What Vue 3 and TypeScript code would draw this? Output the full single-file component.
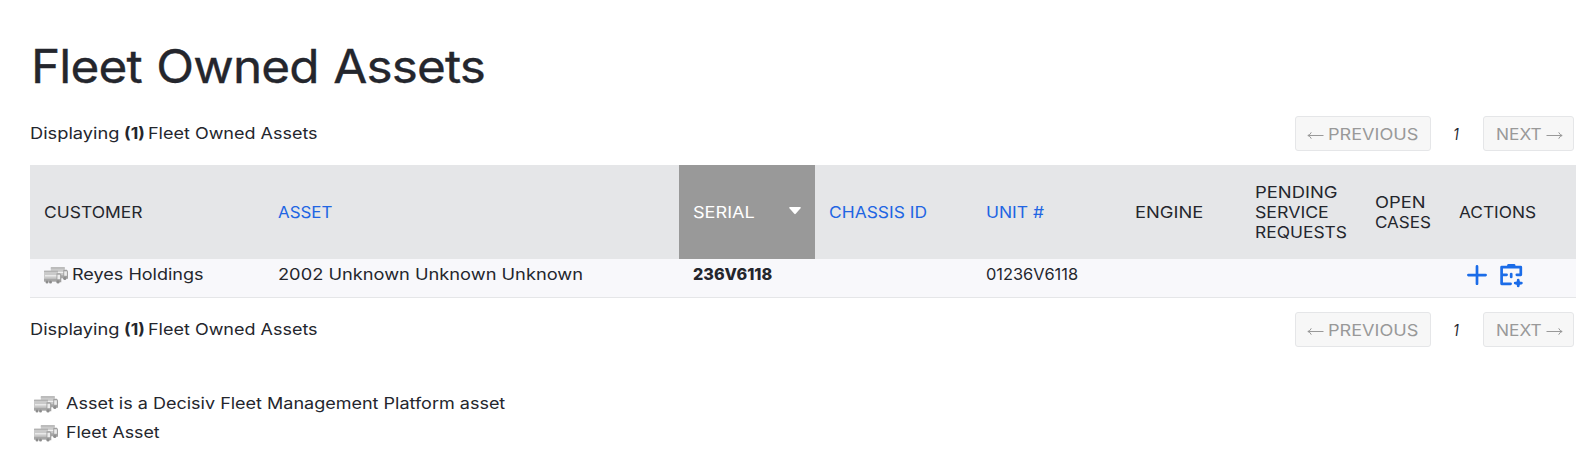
<script setup lang="ts">
import { defineComponent, h } from 'vue'

interface Column {
  key: string
  lines: string[]
  sortable?: boolean
  sorted?: boolean
}

const columns: Column[] = [
  { key: 'customer', lines: ['CUSTOMER'] },
  { key: 'asset', lines: ['ASSET'], sortable: true },
  { key: 'serial', lines: ['SERIAL'], sorted: true },
  { key: 'chassis', lines: ['CHASSIS ID'], sortable: true },
  { key: 'unit', lines: ['UNIT #'], sortable: true },
  { key: 'engine', lines: ['ENGINE'] },
  { key: 'pending', lines: ['PENDING', 'SERVICE', 'REQUESTS'] },
  { key: 'cases', lines: ['OPEN', 'CASES'] },
  { key: 'actions', lines: ['ACTIONS'] },
]

const total = 1

const truck = (x: number, y: number) => [
  h('rect', { x, y, width: 14, height: 9.5, rx: 0.8, fill: '#cacaca' }),
  h('rect', { x, y, width: 14, height: 1.2, fill: '#b0b0b0' }),
  h('rect', { x: x + 1, y: y + 4.5, width: 12, height: 1.2, fill: '#f0f0f0' }),
  h('path', { d: `M${x} ${y + 8}h14v3h-14z`, fill: '#a6a6a6' }),
  h('path', { d: `M${x + 12.5} ${y + 2.5}h3.6l1.2 1.5v7.5h-4.8z`, fill: '#a0a0a0' }),
  h('rect', { x: x + 13.4, y: y + 4, width: 2.7, height: 4.5, fill: '#ececec' }),
  h('circle', { cx: x + 3, cy: y + 11.2, r: 1.5, fill: '#8c8c8c' }),
  h('circle', { cx: x + 6.5, cy: y + 11.2, r: 1.5, fill: '#8c8c8c' }),
  h('circle', { cx: x + 14, cy: y + 11.2, r: 1.6, fill: '#8c8c8c' }),
]

const FleetIcon = defineComponent({
  render: () =>
    h('svg', { width: 24, height: 17, viewBox: '0 0 24 17', 'aria-hidden': 'true' }, [
      ...truck(6.8, 0.3),
      ...truck(0, 3.7),
    ]),
})
</script>

<template>
  <main class="page">
    <h1><span class="wide">Fleet Owned Assets</span></h1>
    <template v-for="place in ['top', 'bottom']" :key="place">
      <div class="bar">
        <p class="count">
          <span class="shown"><span class="wide">Displaying</span></span>
          <b><span class="wide">({{ total }})</span></b>
          <span class="what"><span class="wide">Fleet Owned Assets</span></span>
        </p>
        <nav class="pager">
          <span class="btn prev">
            <svg width="17" height="8" viewBox="0 0 17 8"><path d="M16.5 4.5H1M4.3 1.3Q3.2 4 .8 4.5 3.2 5 4.3 7.7" /></svg>
            <span class="wide">PREVIOUS</span>
          </span>
          <em>1</em>
          <span class="btn next">
            <span class="wide">NEXT</span>
            <svg width="17" height="8" viewBox="0 0 17 8"><path d="M.5 4.5H16M12.7 1.3Q13.8 4 16.2 4.5 13.8 5 12.7 7.7" /></svg>
          </span>
        </nav>
      </div>
      <section v-if="place === 'top'" class="table">
        <div class="row head">
          <div
            v-for="c in columns"
            :key="c.key"
            :class="['cell', c.key, { sortable: c.sortable, sorted: c.sorted }]"
          >
            <div class="label">
              <span v-for="line in c.lines" :key="line" class="wide">{{ line }}</span>
            </div>
            <svg v-if="c.sorted" class="caret" width="12" height="8" viewBox="0 0 12 8">
              <path d="M.9 0h10.2q1.2.3.4 1.3L6.7 6.8q-.7.7-1.4 0L.5 1.3Q-.3.3.9 0z" fill="#fff" />
            </svg>
          </div>
        </div>
        <div class="row body">
          <div class="cell holder"><FleetIcon class="fleet" /><span class="wide">Reyes Holdings</span></div>
          <div class="cell model"><span class="wide">2002 Unknown Unknown Unknown</span></div>
          <div class="cell number"><span class="wide">236V6118</span></div>
          <div class="cell"></div>
          <div class="cell unit-no"><span class="wide">01236V6118</span></div>
          <div class="cell"></div>
          <div class="cell"></div>
          <div class="cell"></div>
          <div class="cell tools">
            <svg width="20" height="20" viewBox="0 0 20 20">
              <path d="M10 1.4v17.4M1.4 10.1h17.2" />
            </svg>
            <svg width="24" height="24" viewBox="0 0 24 24">
              <path d="M8.5 1.4h5.6" stroke-width="2.6" />
              <path d="M1.6 19.4V3.2h19.2v7.6h-4M1.6 10.8h5M1.6 19.8h9" />
              <path d="M11.2 10v3" />
              <path d="M18.2 16v6M15.2 19.1h6.2" />
              <path d="M18.2 15.4l1.2 2.5 2.5 1.2-2.5 1.2-1.2 2.4-1.2-2.4-2.4-1.2 2.4-1.2z" class="solid" />
            </svg>
          </div>
        </div>
      </section>
    </template>
    <ul class="legend">
      <li><FleetIcon /><span class="wide platform">Asset is a Decisiv Fleet Management Platform asset</span></li>
      <li><FleetIcon /><span class="wide fleet-asset">Fleet Asset</span></li>
    </ul>
  </main>
</template>

<style>
body {
  margin: 0;
  background: #fff;
}
</style>

<style scoped>
.page {
  box-sizing: border-box;
  width: 1590px;
  height: 463px;
  padding: 38px 14px 0 30px;
  overflow: hidden;
  color: #24262d;
  font: 400 16px/20px Inter, "Liberation Sans", sans-serif;
}
.wide {
  --stretch: 1.1;
  display: inline-block;
  transform: scaleX(var(--stretch));
  transform-origin: 0 50%;
  white-space: nowrap;
}
h1 {
  height: 56px;
  margin: 0 0 22px 1px;
  font-size: 46px;
  font-weight: 400;
  line-height: 56px;
  letter-spacing: -0.8px;
  word-spacing: 1.5px;
  -webkit-text-stroke: 0.35px #24262d;
}
h1 .wide { --stretch: 1.075; }
.bar {
  display: flex;
  justify-content: space-between;
  height: 35px;
  padding-right: 2px;
}
.count {
  display: flex;
  margin: 7px 0 0;
}
.shown {
  width: 93.5px;
}
.count b {
  width: 24.5px;
}
.shown .wide { --stretch: 1.14; }
.what .wide { --stretch: 1.124; }
.pager {
  display: flex;
  align-items: center;
}
.btn {
  box-sizing: border-box;
  display: flex;
  align-items: center;
  height: 35px;
  padding-top: 1px;
  border: 1px solid #e5e6e8;
  border-radius: 3px;
  background: #f7f7f7;
  color: #999;
}
.btn svg {
  margin-top: 2px;
  fill: none;
  stroke: #999;
  stroke-width: 1;
}
.prev {
  width: 136px;
  gap: 4.5px;
  padding-left: 10.5px;
}
.next {
  width: 91px;
  justify-content: space-between;
  padding: 1px 10.5px 0 11.5px;
}
.prev .wide { --stretch: 1.132; }
.next .wide { --stretch: 1.08; }
.pager em {
  width: 52px;
  text-align: center;
  font: italic 400 16px/20px Inter, sans-serif;
  transform: translateX(-1px) scaleX(0.85);
}
.table {
  margin: 14px 0;
}
.row {
  display: grid;
  grid-template-columns: 234px 415px 136px 157px 149px 120px 120px 84px 131px;
}
.head {
  height: 94px;
  background: #e5e6e8;
}
.cell {
  display: flex;
  align-items: center;
  padding-left: 14px;
  white-space: nowrap;
}
.label {
  display: flex;
  flex-direction: column;
  align-items: flex-start;
}
.sortable {
  color: #2165e3;
}
.sorted {
  justify-content: space-between;
  padding-right: 14px;
  background: #999;
  color: #fff;
}
.caret {
  margin-bottom: 2px;
}
.customer .wide { --stretch: 1.09; }
.asset .wide { --stretch: 1.055; }
.serial .wide { --stretch: 1.132; }
.chassis .wide { --stretch: 1.088; }
.unit .wide { --stretch: 1.09; }
.engine .wide { --stretch: 1.145; }
.pending .wide:nth-child(1) { --stretch: 1.15; }
.pending .wide:nth-child(2) { --stretch: 1.108; }
.pending .wide:nth-child(3) { --stretch: 1.088; }
.cases .wide:nth-child(1) { --stretch: 1.144; }
.cases .wide:nth-child(2) { --stretch: 1.065; }
.actions .wide { --stretch: 1.08; }
.body {
  height: 38px;
  border-bottom: 1px solid #e5e6e8;
  background: #f8f8fb;
}
.body .cell {
  align-items: flex-start;
  padding-top: 5px;
}
.fleet {
  margin: 3px 4px 0 0;
}
.holder .wide { --stretch: 1.127; }
.model .wide { --stretch: 1.14; }
.number { font-weight: 800; }
.number .wide { --stretch: 1.01; }
.unit-no .wide { --stretch: 1.024; }
.body .tools {
  gap: 13px;
  padding: 5px 0 0 22px;
}
.tools svg {
  margin-top: 1px;
}
.tools svg + svg {
  margin-top: 0;
}
.tools path {
  fill: none;
  stroke: #1b6ce8;
  stroke-width: 2.7;
  stroke-linecap: round;
  stroke-linejoin: round;
}
.tools .solid {
  fill: #1b6ce8;
  stroke-width: 0.8;
}
.legend {
  margin: 42px 0 0 4px;
  padding: 0;
  list-style: none;
}
.legend li {
  display: flex;
  align-items: flex-start;
  gap: 8px;
  box-sizing: border-box;
  height: 29px;
  padding-top: 4px;
}
.legend svg {
  margin-top: 3px;
}
.platform { --stretch: 1.125; }
.fleet-asset { --stretch: 1.112; }
</style>
